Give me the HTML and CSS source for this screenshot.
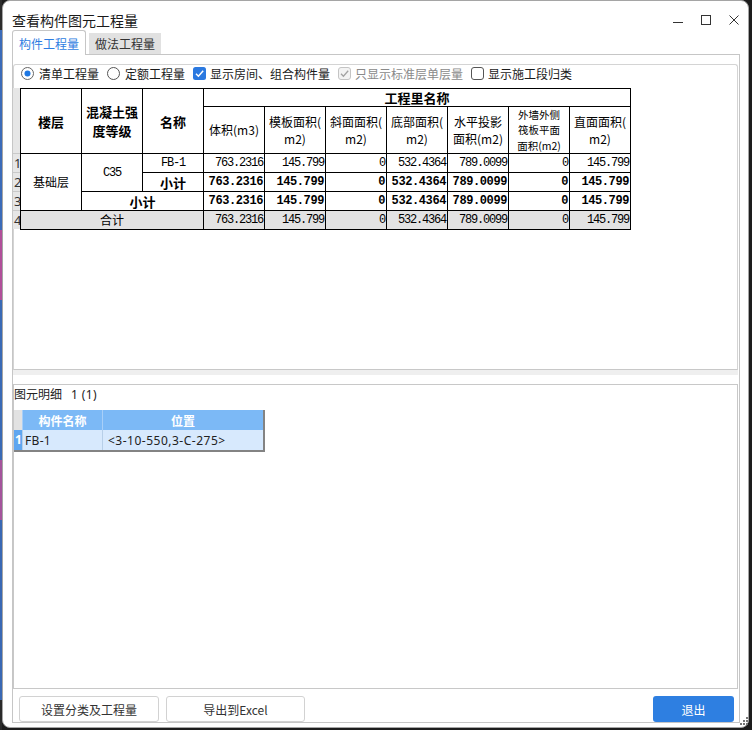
FILE: index.html
```html
<!DOCTYPE html>
<html lang="zh-CN">
<head>
<meta charset="utf-8">
<title>查看构件图元工程量</title>
<link rel="stylesheet" href="styles.css">
</head>
<body>
<div class="window">
  <div class="titlebar">
    <div class="title">查看构件图元工程量</div>
    <div class="controls">
      <svg class="ctl" width="10" height="10" viewBox="0 0 10 10"><path d="M0 7.5H10" stroke="#333" stroke-width="1" fill="none"/></svg>
      <svg class="ctl" width="10" height="10" viewBox="0 0 10 10"><rect x="0.5" y="0.5" width="9" height="9" stroke="#333" stroke-width="1" fill="none"/></svg>
      <svg class="ctl" width="10" height="10" viewBox="0 0 10 10"><path d="M0.5 0.5L9.5 9.5M9.5 0.5L0.5 9.5" stroke="#333" stroke-width="1" fill="none"/></svg>
    </div>
  </div>
  <div class="tabs">
    <div class="tab active">构件工程量</div>
    <div class="tab">做法工程量</div>
  </div>
  <div class="panel">
    <div class="upper">
      <div class="options">
        <label class="opt"><svg class="radio" width="13" height="13" viewBox="0 0 13 13"><circle cx="6.5" cy="6.5" r="6" fill="#fff" stroke="#666"/><circle cx="6.5" cy="6.5" r="3" fill="#1f78e3"/></svg>清单工程量</label>
        <label class="opt"><svg class="radio" width="13" height="13" viewBox="0 0 13 13"><circle cx="6.5" cy="6.5" r="6" fill="#fff" stroke="#555"/></svg>定额工程量</label>
        <label class="opt"><svg class="check" width="13" height="13" viewBox="0 0 13 13"><rect x="0" y="0" width="13" height="13" rx="2.5" fill="#2b79e0"/><path d="M3 6.8L5.4 9.2L10.2 3.8" stroke="#fff" stroke-width="1.5" fill="none"/></svg>显示房间、组合构件量</label>
        <label class="opt disabled"><svg class="check" width="13" height="13" viewBox="0 0 13 13"><rect x="0.5" y="0.5" width="12" height="12" rx="2.5" fill="#f3f3f3" stroke="#c4c4c4"/><path d="M3 6.8L5.4 9.2L10.2 3.8" stroke="#a2a2a2" stroke-width="1.3" fill="none"/></svg>只显示标准层单层量</label>
        <label class="opt"><svg class="check" width="13" height="13" viewBox="0 0 13 13"><rect x="0.5" y="0.5" width="12" height="12" rx="2.5" fill="#fff" stroke="#555"/></svg>显示施工段归类</label>
      </div>
      <div class="sheet">
        <div class="rowhdr">
          <div class="rh-top"></div>
          <div class="rh">1</div>
          <div class="rh">2</div>
          <div class="rh">3</div>
          <div class="rh">4</div>
        </div>
        <div class="qt">
          <div class="hb rs2">楼层</div>
          <div class="hb two rs2">混凝土强<br>度等级</div>
          <div class="hb rs2">名称</div>
          <div class="hb cs7">工程里名称</div>
          <div>体积(m3)</div>
          <div class="sub">模板面积(<br>m2)</div>
          <div class="sub">斜面面积(<br>m2)</div>
          <div class="sub">底部面积(<br>m2)</div>
          <div class="sub">水平投影<br>面积(m2)</div>
          <div class="tight">外墙外侧<br>筏板平面<br>面积(m2)</div>
          <div class="sub">直面面积(<br>m2)</div>

          <div class="rs3">基础层</div>
          <div class="rs2 mono">C35</div>
          <div class="mono">FB-1</div>
          <div class="num">763.2316</div>
          <div class="num">145.799</div>
          <div class="num">0</div>
          <div class="num">532.4364</div>
          <div class="num">789.0099</div>
          <div class="num">0</div>
          <div class="num">145.799</div>

          <div class="hb">小计</div>
          <div class="num b">763.2316</div>
          <div class="num b">145.799</div>
          <div class="num b">0</div>
          <div class="num b">532.4364</div>
          <div class="num b">789.0099</div>
          <div class="num b">0</div>
          <div class="num b">145.799</div>

          <div class="hb cs2">小计</div>
          <div class="num b">763.2316</div>
          <div class="num b">145.799</div>
          <div class="num b">0</div>
          <div class="num b">532.4364</div>
          <div class="num b">789.0099</div>
          <div class="num b">0</div>
          <div class="num b">145.799</div>

          <div class="cs3 total">合计</div>
          <div class="num total">763.2316</div>
          <div class="num total">145.799</div>
          <div class="num total">0</div>
          <div class="num total">532.4364</div>
          <div class="num total">789.0099</div>
          <div class="num total">0</div>
          <div class="num total">145.799</div>
        </div>
      </div>
    </div>
    <div class="splitter"></div>
    <div class="lower">
      <div class="lower-label">图元明细<span class="count">1 (1)</span></div>
      <div class="lgrid">
        <div class="lg-corner"></div>
        <div class="lg-head">构件名称</div>
        <div class="lg-head">位置</div>
        <div class="lg-rownum">1</div>
        <div class="lg-cell">FB-1</div>
        <div class="lg-cell pos">&lt;3-10-550,3-C-275&gt;</div>
      </div>
    </div>
    <div class="buttons">
      <button class="btn">设置分类及工程量</button>
      <button class="btn narrow">导出到Excel</button>
      <button class="btn primary">退出</button>
    </div>
  </div>
  <svg class="grip" width="9" height="9" viewBox="0 0 9 9"><g fill="#777"><rect x="7" y="0" width="2" height="2"/><rect x="4" y="3" width="2" height="2"/><rect x="7" y="3" width="2" height="2"/><rect x="1" y="6" width="2" height="2"/><rect x="4" y="6" width="2" height="2"/><rect x="7" y="6" width="2" height="2"/></g></svg>
</div>
</body>
</html>
```

FILE: styles.css
```css
html, body {
  margin: 0;
  padding: 0;
}

body {
  width: 752px;
  height: 730px;
  overflow: hidden;
  background:
    linear-gradient(to bottom, #2c2c2c 0 30px, #3b6bb8 30px 230px, #b14f9a 230px 300px, #3a6ab5 300px 460px, #a4549c 460px 520px, #3968b3 520px 700px, #2a2a2a 700px) left top / 2px 100% no-repeat,
    #1d1d1d;
  font-family: "Noto Sans CJK SC", "Noto Sans", sans-serif;
  color: #1a1a1a;
}

.window {
  position: relative;
  margin-left: 2px;
  width: 747px;
  height: 728px;
  box-sizing: border-box;
  border: 1px solid #a5a5a5;
  border-radius: 8px;
  background: #fff;
  padding: 0 8px 4px 9px;
  display: flex;
  flex-direction: column;
}

/* title bar */
.titlebar {
  height: 29px;
  flex: none;
  display: flex;
  justify-content: space-between;
  align-items: flex-start;
}

.title {
  padding-top: 9px;
  font-size: 14px;
  line-height: 20px;
  color: #1a1a1a;
}

.controls {
  padding-top: 14px;
  margin-right: 1px;
  display: flex;
  gap: 18px;
}

.ctl {
  display: block;
}

/* tabs */
.tabs {
  height: 24px;
  flex: none;
  display: flex;
  align-items: flex-end;
  gap: 3px;
}

.tab {
  box-sizing: border-box;
  width: 72px;
  height: 21px;
  display: flex;
  align-items: center;
  justify-content: center;
  font-size: 12px;
  color: #333;
  background: #e1e1e1;
}

.tab.active {
  position: relative;
  z-index: 1;
  width: 74px;
  height: 25px;
  margin-bottom: -1px;
  background: #fff;
  border: 1px solid #c6c6c6;
  border-bottom: none;
  border-radius: 3px 3px 0 0;
  color: #2f7de1;
}

/* panel */
.panel {
  flex: none;
  height: 669px;
  box-sizing: border-box;
  border: 1px solid #c6c6c6;
  padding: 9px 1px 0 0;
  display: flex;
  flex-direction: column;
}

.upper {
  flex: none;
  height: 306px;
  box-sizing: border-box;
  border: 1px solid #d4d4d4;
  border-bottom-color: #c8c8c8;
  border-radius: 3px 3px 0 0;
}

.options {
  height: 17px;
  display: flex;
  align-items: center;
  padding-left: 7px;
  font-size: 12px;
  line-height: 17px;
  color: #1a1a1a;
}

.opt {
  display: flex;
  align-items: center;
  margin-right: 8px;
  white-space: nowrap;
}

.opt .radio {
  display: block;
  margin-right: 5px;
}

.opt .check {
  display: block;
  margin-right: 4px;
}

.opt.disabled {
  color: #8a8a8a;
  margin-right: 8px;
}

.sheet {
  margin-top: 6px;
  margin-left: -1px;
  display: flex;
  align-items: flex-start;
}

.rowhdr {
  width: 7px;
  background: #e6e6e6;
  overflow: hidden;
}

.rh-top {
  height: 65px;
}

.rh {
  height: 18px;
  border-top: 1px solid #c9c9c9;
  font-family: "Noto Sans", sans-serif;
  font-size: 13px;
  line-height: 18px;
  color: #333;
  padding-left: 1px;
  white-space: nowrap;
}

/* quantity table */
.qt {
  display: grid;
  grid-template-columns: repeat(10, 60px);
  grid-template-rows: 17px 46px repeat(4, 18px);
  gap: 1px;
  padding: 1px;
  background: #000;
}

.qt > div {
  background: #fff;
  display: flex;
  align-items: center;
  justify-content: center;
  text-align: center;
  font-size: 12px;
  line-height: 18px;
  color: #000;
  overflow: hidden;
  white-space: nowrap;
}

.qt > .hb {
  font-weight: 700;
  font-size: 13px;
  line-height: 19px;
}

.qt > .sub {
  line-height: 17.5px;
}

.qt > .tight {
  font-size: 10.5px;
  line-height: 15.3px;
}

.qt > .mono {
  font-family: "Liberation Mono", monospace;
  letter-spacing: -1.2px;
}

.qt > .num {
  justify-content: flex-end;
  font-family: "Liberation Mono", monospace;
  letter-spacing: -1.2px;
  padding-right: 1px;
}

.qt > .num.b {
  font-weight: 700;
  letter-spacing: -0.4px;
  padding-right: 1px;
}

.qt > .total {
  background: #e3e3e3;
}

.rs2 { grid-row: span 2; }
.rs3 { grid-row: span 3; }
.cs2 { grid-column: span 2; }
.cs3 { grid-column: span 3; }
.cs7 { grid-column: span 7; }

/* splitter */
.splitter {
  flex: none;
  height: 5px;
  background: #efefef;
  margin-bottom: 9px;
}

/* lower pane */
.lower {
  flex: none;
  height: 305px;
  box-sizing: border-box;
  border: 1px solid #c8c8c8;
}

.lower-label {
  font-size: 12px;
  line-height: 17px;
  color: #222;
}

.lower-label .count {
  margin-left: 9px;
  font-family: "Noto Sans", "Noto Sans CJK SC", sans-serif;
  letter-spacing: 0.4px;
}

.lgrid {
  margin-top: 7px;
  display: grid;
  grid-template-columns: 8px 80px 161px;
  grid-template-rows: 20px 20px;
  width: max-content;
  border-right: 2px solid #838383;
  border-bottom: 2px solid #838383;
  font-size: 12px;
}

.lg-corner {
  background: #e2e2e2;
}

.lg-head {
  background: #7cb9f6;
  border-left: 1px solid #a8cff8;
  color: #fff;
  font-weight: 700;
  display: flex;
  align-items: center;
  justify-content: center;
}

.lg-rownum {
  background: #5ea6f0;
  color: #fff;
  font-weight: 700;
  font-family: "Noto Sans", sans-serif;
  font-size: 12px;
  line-height: 20px;
  overflow: hidden;
  padding-left: 1px;
}

.lg-cell {
  background: #d7e9fd;
  border-left: 1px solid #b7cfe8;
  color: #222;
  display: flex;
  align-items: center;
  padding-left: 2px;
  white-space: nowrap;
  font-family: "Noto Sans", "Noto Sans CJK SC", sans-serif;
  letter-spacing: 0.3px;
}

.lg-cell.pos {
  padding-left: 5px;
  letter-spacing: 0.5px;
}

/* buttons */
.buttons {
  flex: none;
  margin-top: 7px;
  height: 26px;
  display: flex;
  gap: 7px;
  padding: 0 4px 0 6px;
}

.btn {
  box-sizing: border-box;
  width: 140px;
  height: 26px;
  margin: 0;
  padding: 0;
  border: 1px solid #d2d2d2;
  border-radius: 3px;
  background: #fff;
  font-family: "Noto Sans CJK SC", "Noto Sans", sans-serif;
  font-size: 12px;
  color: #333;
}

.btn.narrow {
  width: 139px;
}

.btn.primary {
  width: 81px;
  margin-left: auto;
  border: none;
  background: #2e7fe1;
  color: #fff;
}

.grip {
  position: absolute;
  right: 0;
  bottom: 1px;
}
```
